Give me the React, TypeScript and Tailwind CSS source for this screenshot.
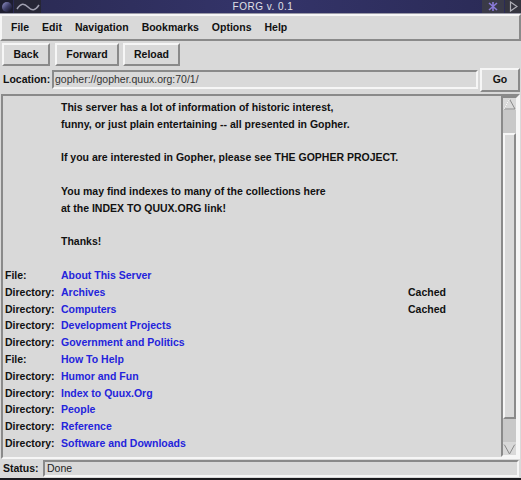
import React from "react";

const raised = "border-2 border-t-[#f6f6f6] border-l-[#f6f6f6] border-b-[#8a8a8a] border-r-[#8a8a8a]";
const sunken = "border-2 border-t-[#8a8a8a] border-l-[#8a8a8a] border-b-[#f6f6f6] border-r-[#f6f6f6]";

const links: [string, string, string?][] = [
  ["File:", "About This Server"],
  ["Directory:", "Archives", "Cached"],
  ["Directory:", "Computers", "Cached"],
  ["Directory:", "Development Projects"],
  ["Directory:", "Government and Politics"],
  ["File:", "How To Help"],
  ["Directory:", "Humor and Fun"],
  ["Directory:", "Index to Quux.Org"],
  ["Directory:", "People"],
  ["Directory:", "Reference"],
  ["Directory:", "Software and Downloads"],
];

function Arrow({ up }: { up: boolean }) {
  return (
    <svg width="13" height="12" viewBox="0 0 13 12" className="block">
      {up ? (
        <>
          <polygon points="6.5,1 12,11 1,11" fill="#d9d9d9" stroke="#8a8a8a" strokeWidth="1" />
          <polyline points="1,11 6.5,1" fill="none" stroke="#ffffff" strokeWidth="1" />
        </>
      ) : (
        <>
          <polygon points="1,1 12,1 6.5,11" fill="#d9d9d9" stroke="#8a8a8a" strokeWidth="1" />
          <polyline points="1,1 12,1" fill="none" stroke="#ffffff" strokeWidth="1" />
        </>
      )}
    </svg>
  );
}

export default function App() {
  return (
    <div className="w-[521px] h-[480px] bg-[#d9d9d9] flex flex-col overflow-hidden font-['Liberation_Sans',Arial,sans-serif] text-[10px] font-bold text-[#111]">
      {/* Title bar */}
      <div className="h-[14px] flex items-stretch bg-gradient-to-r from-[#2a2a52] via-[#34346a] to-[#2a2a55] border-b border-[#9a9aa8]">
        <div className="w-[13px] flex items-center justify-center bg-[#1e1e30]">
          <div className="w-[10px] h-[10px] rounded-full bg-gradient-to-br from-[#9a9ad0] via-[#40406a] to-[#101020]" />
        </div>
        <div className="w-[27px] flex items-center justify-center bg-[#262636] ml-[1px]">
          <svg width="24" height="10" viewBox="0 0 24 10">
            <path d="M1 7 C5 1, 8 1, 12 5 S19 9, 23 3" fill="none" stroke="#a0a0b0" strokeWidth="1.5" />
          </svg>
        </div>
        <div className="flex-1 flex items-center justify-center">
          <span className="font-normal text-[10px] leading-none tracking-[0.5px] text-[#e0e0e8] pl-[3px]">FORG v. 0.1</span>
        </div>
        <div className="w-[22px] flex items-center justify-center bg-[#3a3a48]">
          <svg width="12" height="11" viewBox="0 0 12 11">
            <path d="M2 2 L10 9 M10 2 L2 9 M6 1 L6 10" stroke="#8a7ad8" strokeWidth="1.6" />
          </svg>
        </div>
        <div className="w-[16px] flex items-center justify-center bg-[#34343f] ml-[1px]">
          <svg width="9" height="11" viewBox="0 0 9 11">
            <polygon points="1.5,1 8,5.5 1.5,10" fill="none" stroke="#b0b0b8" strokeWidth="1.2" />
          </svg>
        </div>
      </div>

      {/* Menu bar */}
      <div className={`h-[27px] flex items-center pl-[9px] gap-[13px] ${raised}`}>
        {["File", "Edit", "Navigation", "Bookmarks", "Options", "Help"].map((m) => (
          <span key={m} className="text-[10.5px]">{m}</span>
        ))}
      </div>

      {/* Toolbar */}
      <div className="h-[25px] flex items-center pl-[2px] gap-[4px] mt-[1px]">
        <div className={`w-[48px] h-[23px] flex items-center justify-center text-[10.5px] ${raised}`}>Back</div>
        <div className={`w-[64px] h-[23px] flex items-center justify-center text-[10.5px] ml-[1px] ${raised}`}>Forward</div>
        <div className={`w-[57px] h-[23px] flex items-center justify-center text-[10.5px] ${raised}`}>Reload</div>
      </div>

      {/* Location */}
      <div className="h-[25px] flex items-center pl-[3px] pr-[1px]">
        <span className="text-[10.5px] w-[49px]">Location:</span>
        <div className={`w-[426px] h-[19px] flex items-center pl-[1px] font-normal text-[10.5px] text-[#333] ${sunken}`}>
          gopher://gopher.quux.org:70/1/
        </div>
        <div className={`ml-auto w-[40px] h-[24px] flex items-center justify-center text-[10.5px] ${raised}`}>Go</div>
      </div>

      {/* Content */}
      <div className={`mt-[2px] mx-[1px] h-[365px] flex ${sunken}`}>
        <div className="flex-1 pt-[3px] pl-[1px] leading-[16.8px] text-[10.5px]">
          <div className="pl-[57px]">
            <div>This server has a lot of information of historic interest,</div>
            <div>funny, or just plain entertaining -- all presented in Gopher.</div>
            <div className="h-[16.8px]" />
            <div>If you are interested in Gopher, please see THE GOPHER PROJECT.</div>
            <div className="h-[16.8px]" />
            <div>You may find indexes to many of the collections here</div>
            <div>at the INDEX TO QUUX.ORG link!</div>
            <div className="h-[16.8px]" />
            <div>Thanks!</div>
            <div className="h-[16.8px]" />
          </div>
          {links.map(([k, v, c], i) => (
            <div key={i} className="flex">
              <span className="w-[57px] pl-[1px]">{k}</span>
              <span className="w-[347px] text-[#2424dc]">{v}</span>
              {c && <span>{c}</span>}
            </div>
          ))}
        </div>
        {/* Scrollbar */}
        <div className={`w-[17px] flex flex-col bg-[#c8c8c8] ${sunken}`}>
          <div className="h-[12px] flex items-center justify-center bg-[#d9d9d9]"><Arrow up /></div>
          <div className="h-[23px]" />
          <div className={`flex-1 bg-[#d9d9d9] ${raised}`} />
          <div className="h-[23px]" />
          <div className="h-[13px] flex items-center justify-center bg-[#d9d9d9]"><Arrow up={false} /></div>
        </div>
      </div>

      {/* Status */}
      <div className="h-[19px] flex items-center pl-[3px] pr-[2px]">
        <span className="text-[10.5px] w-[40px]">Status:</span>
        <div className={`flex-1 h-[17px] flex items-center pl-[2px] font-normal text-[10.5px] text-[#222] ${sunken}`}>Done</div>
      </div>
      <div className="flex-1 bg-[#1a1a1e]" />
    </div>
  );
}
